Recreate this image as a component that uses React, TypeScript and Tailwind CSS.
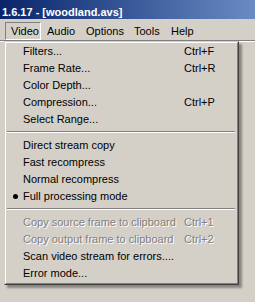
import React from 'react'

type Item = {
  label: string
  shortcut?: string
  disabled?: boolean
  checked?: boolean
}

const groups: Item[][] = [
  [
    { label: 'Filters...', shortcut: 'Ctrl+F' },
    { label: 'Frame Rate...', shortcut: 'Ctrl+R' },
    { label: 'Color Depth...' },
    { label: 'Compression...', shortcut: 'Ctrl+P' },
    { label: 'Select Range...' },
  ],
  [
    { label: 'Direct stream copy' },
    { label: 'Fast recompress' },
    { label: 'Normal recompress' },
    { label: 'Full processing mode', checked: true },
  ],
  [
    { label: 'Copy source frame to clipboard', shortcut: 'Ctrl+1', disabled: true },
    { label: 'Copy output frame to clipboard', shortcut: 'Ctrl+2', disabled: true },
    { label: 'Scan video stream for errors....' },
    { label: 'Error mode...' },
  ],
]

// widths picked so the labels land where the original menu bar puts them
const menus = [
  { label: 'Video', w: 'w-[36px]' },
  { label: 'Audio', w: 'w-[39px]' },
  { label: 'Options', w: 'w-[48px]' },
  { label: 'Tools', w: 'w-[37px]' },
  { label: 'Help', w: 'w-[34px]' },
]

const MenuRow = ({ item }: { item: Item }) => {
  const tone = item.disabled
    ? 'text-[#808080] [text-shadow:1px_1px_0_#ffffff]'
    : 'text-black'
  return (
    <div className={`grid grid-cols-[17px_161px_1fr] h-[17px] items-center leading-[13px] ${tone}`}>
      <div className="flex items-center justify-center pl-[2px]">
        {item.checked && <span className="block w-[5px] h-[5px] rounded-full bg-black" />}
      </div>
      <span className="whitespace-nowrap">{item.label}</span>
      <span className="whitespace-nowrap">{item.shortcut}</span>
    </div>
  )
}

const Separator = () => (
  <div className="h-[9px] pt-[3px] ml-px mr-[2px]">
    <div className="h-px bg-[#808080]" />
    <div className="h-px bg-white" />
  </div>
)

export default function App() {
  return (
    <div className="relative w-[255px] h-[302px] overflow-hidden bg-[#d4d0c8] text-[11px] font-['Liberation_Sans',Arial,sans-serif]">
      {/* title bar */}
      <div className="h-[19px] pt-[6px] pl-[2px] bg-gradient-to-r from-[#0a246a] to-[#6a8cc4] text-white font-bold leading-[13px] whitespace-nowrap">
        1.6.17 - [woodland.avs]
      </div>

      {/* menu bar */}
      <div className="flex h-[21px] pt-[3px] pl-[5px]">
        {menus.map((m, i) => (
          <div
            key={m.label}
            className={`${m.w} h-[18px] flex items-center pl-[5px] border ${
              i === 0
                ? 'border-t-[#808080] border-l-[#808080] border-b-white border-r-white'
                : 'border-transparent'
            }`}
          >
            {m.label}
          </div>
        ))}
      </div>
      <div className="h-px bg-[#808080]" />
      <div className="h-px bg-white" />

      {/* dropdown */}
      <div className="absolute left-[4px] top-[41px] w-[235px] border border-t-[#d4d0c8] border-l-[#d4d0c8] border-r-[#404040] border-b-[#404040] shadow-[3px_3px_2px_rgba(0,0,0,0.35)]">
        <div className="border border-t-white border-l-white border-r-[#808080] border-b-[#808080] bg-[#d4d0c8] pb-px">
          {groups.map((g, gi) => (
            <div key={gi}>
              {gi > 0 && <Separator />}
              {g.map((item) => (
                <MenuRow key={item.label} item={item} />
              ))}
            </div>
          ))}
        </div>
      </div>
    </div>
  )
}
